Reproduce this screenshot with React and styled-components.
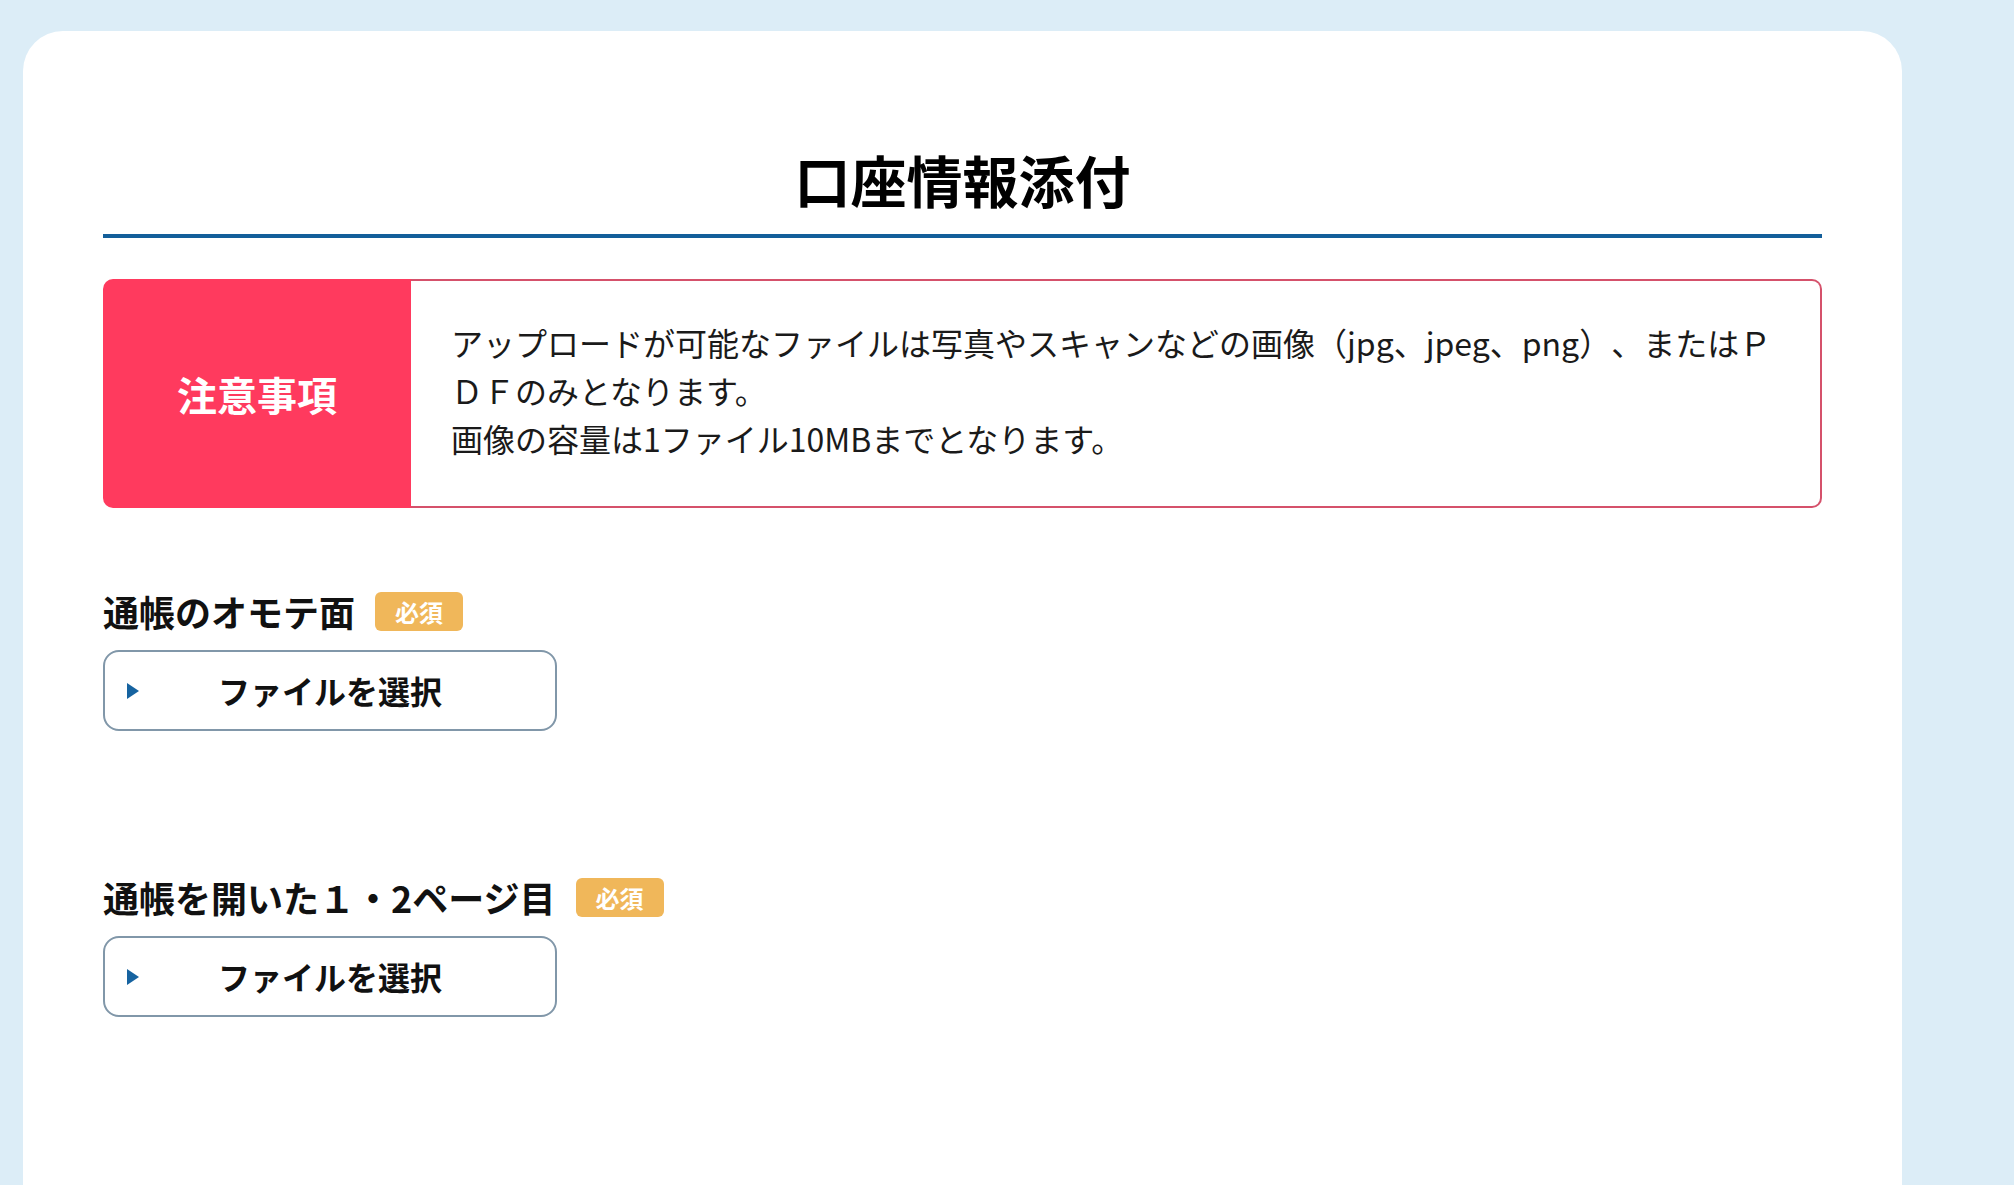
import React from "react";
import styled, { createGlobalStyle } from "styled-components";

const GlobalStyle = createGlobalStyle`
  html, body {
    margin: 0;
    padding: 0;
    overflow: hidden;
    background: #dcedf7;
  }
  body {
    font-family: "Noto Sans CJK JP", "Noto Sans", sans-serif;
    color: #111;
  }
  * {
    box-sizing: border-box;
  }
`;

const Page = styled.div`
  min-height: 100vh;
  padding: 31px 0 0 23px;
`;

const Card = styled.main`
  width: 1879px;
  min-height: calc(100vh - 31px);
  background: #fff;
  border-radius: 40px 40px 0 0;
  padding: 106px 80px 0;
`;

const Title = styled.h1`
  margin: 0;
  padding-bottom: 13px;
  border-bottom: 4px solid #135f9a;
  text-align: center;
  font-size: 56px;
  line-height: 84px;
  font-weight: 700;
  color: #000;
`;

const Notice = styled.div`
  display: flex;
  margin-top: 41px;
`;

const NoticeLabel = styled.div`
  width: 308px;
  flex-shrink: 0;
  display: flex;
  align-items: center;
  justify-content: center;
  background: #ff3a5e;
  border-radius: 10px 0 0 10px;
  color: #fff;
  font-size: 40px;
  font-weight: 700;
`;

const NoticeBody = styled.div`
  flex: 1;
  border: 2px solid #d5516b;
  border-left: none;
  border-radius: 0 10px 10px 0;
  padding: 37px 40px 44px;
  font-size: 32px;
  line-height: 48px;
  color: #1a1a1a;
  text-spacing-trim: space-all;

  p {
    margin: 0;
  }
`;

const Section = styled.section`
  margin-top: ${(p) => p.$top}px;
`;

const FieldHead = styled.div`
  display: flex;
  align-items: center;
  gap: 20px;
  height: 54px;
`;

const FieldTitle = styled.h2`
  margin: 0;
  font-size: 36px;
  line-height: 54px;
  font-weight: 700;
  color: #111;
`;

const Required = styled.span`
  display: inline-block;
  height: 39px;
  padding: 0 20px;
  border-radius: 6px;
  background: #f0b75a;
  color: #fff;
  font-size: 24px;
  line-height: 39px;
  font-weight: 700;
`;

const FileButton = styled.button`
  position: relative;
  display: block;
  width: 454px;
  height: 81px;
  margin-top: 12px;
  padding: 0 0 2px;
  background: #fff;
  border: 2px solid #8197a9;
  border-radius: 16px;
  font-family: inherit;
  font-size: 32px;
  font-weight: 700;
  color: #111;
  cursor: pointer;

  &::before {
    content: "";
    position: absolute;
    left: 22px;
    top: 50%;
    margin-top: -8px;
    border-style: solid;
    border-width: 8px 0 8px 12px;
    border-color: transparent transparent transparent #1663a0;
  }
`;

const fields = [
  { title: "通帳のオモテ面", top: 76 },
  { title: "通帳を開いた１・2ページ目", top: 139 },
];

function App() {
  return (
    <Page>
      <GlobalStyle />
      <Card>
        <Title>口座情報添付</Title>
        <Notice>
          <NoticeLabel>注意事項</NoticeLabel>
          <NoticeBody>
            <p>
              アップロードが可能なファイルは写真やスキャンなどの画像（jpg、jpeg、png）、またはＰＤＦのみとなります。
            </p>
            <p>画像の容量は1ファイル10MBまでとなります。</p>
          </NoticeBody>
        </Notice>
        {fields.map((f, i) => (
          <Section key={i} $top={f.top}>
            <FieldHead>
              <FieldTitle>{f.title}</FieldTitle>
              <Required>必須</Required>
            </FieldHead>
            <FileButton type="button">ファイルを選択</FileButton>
          </Section>
        ))}
      </Card>
    </Page>
  );
}

export default App;
